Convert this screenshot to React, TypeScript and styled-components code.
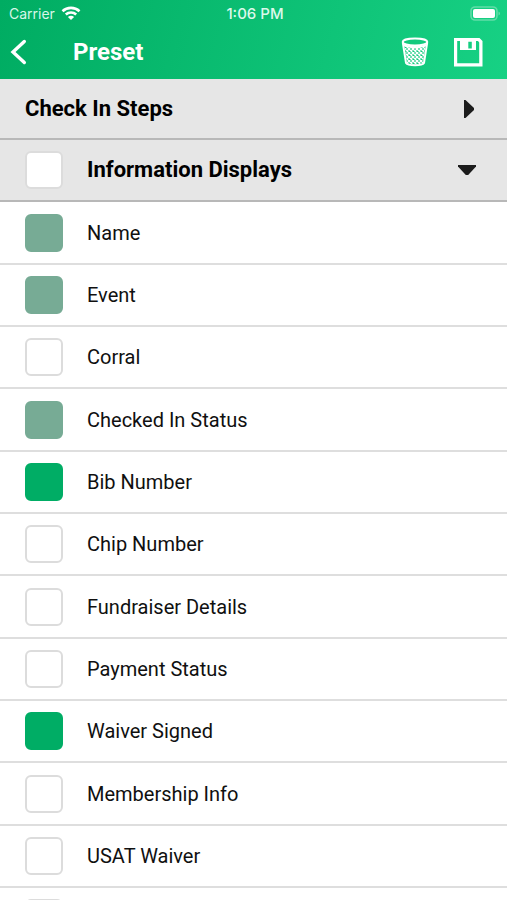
import React, { useState } from "react";
import styled, { createGlobalStyle } from "styled-components";

const GlobalStyle = createGlobalStyle`
  * { box-sizing: border-box; }
  body { margin: 0; background: #fff; }
  button { border: 0; padding: 0; background: none; color: inherit; font: inherit; cursor: pointer; }
  svg { display: block; }
`;

const Screen = styled.div`
  height: 100vh;
  display: flex;
  flex-direction: column;
  overflow: hidden;
  font-family: Roboto, sans-serif;
  color: #101010;
`;

const Header = styled.header`
  flex: none;
  color: #fff;
  background: linear-gradient(105deg, #00ac62 0%, #17d184 100%);
`;

const StatusBar = styled.div`
  display: grid;
  grid-template-columns: 1fr auto 1fr;
  align-items: center;
  height: 27px;
  padding: 0 6px 0 9px;
  font-family: Inter, sans-serif;
  font-size: 14px;
  line-height: 26px;
`;

const Carrier = styled.div`
  display: flex;
  align-items: center;
  gap: 6px;
  color: #d8f6e8;
`;

const Clock = styled.div`
  font-size: 15px;
  font-weight: 500;
  color: #dcf8eb;
`;

const Battery = styled.div`
  justify-self: end;
`;

const NavBar = styled.div`
  display: flex;
  align-items: center;
  height: 52px;
  padding: 0 24px 2px 10px;
`;

const BackButton = styled.button`
  width: 63px;
  height: 48px;
`;

const Title = styled.h1`
  flex: 1;
  margin: 0;
  font-size: 24px;
  line-height: 48px;
  font-weight: 700;
`;

const Actions = styled.div`
  display: flex;
  align-items: center;
  gap: 24px;
`;

const SectionHeader = styled.div`
  display: flex;
  align-items: center;
  gap: 24px;
  min-height: 61px;
  padding: 0 26px 0 25px;
  background: #e6e6e6;
  border-bottom: 2px solid #b8b8b8;
`;

const Section = styled.section`
  flex: none;
  & + & ${SectionHeader} { min-height: 62px; }
`;

const SectionTitle = styled.h2`
  flex: 1;
  margin: 0;
  font-size: 22px;
  line-height: 28px;
  font-weight: 700;
  color: #000;
`;

const OptionList = styled.ul`
  margin: 0;
  padding: 0;
  list-style: none;
`;

const Option = styled.li`
  min-height: 62px;
  display: flex;
  border-bottom: 2px solid #dedede;
  &:nth-child(3n + 1) { min-height: 63px; }
`;

const OptionLabel = styled.label`
  flex: 1;
  display: flex;
  align-items: center;
  gap: 24px;
  padding: 0 25px;
  font-size: 20px;
  line-height: 26px;
`;

const CheckBox = styled.input`
  appearance: none;
  flex: none;
  width: 38px;
  height: 38px;
  margin: 0;
  border: 2px solid #dcdcdc;
  border-radius: 6px;
  background: #fff;
  &:checked { background: #00ad65; border-color: #00ad65; }
  &:checked:disabled { background: #77ab95; border-color: #77ab95; }
`;

const ToggleArrow = styled.button<{ $open: boolean }>`
  display: flex;
  align-items: center;
  justify-content: center;
  width: 28px;
  height: 40px;
  padding-left: ${(p) => (p.$open ? "0" : "4px")};
`;

const WifiIcon = () => (
  <svg width="20" height="15" viewBox="0 0 20 15" fill="none" stroke="#fff" strokeWidth="2.6">
    <path d="M1.5 5.2C6.2.8 13.8.8 18.5 5.2" />
    <path d="M4.8 8.5C7.7 5.8 12.3 5.8 15.2 8.5" />
    <path d="M10 14 6.9 10.9C8.6 9.3 11.4 9.3 13.1 10.9Z" fill="#fff" stroke="none" />
  </svg>
);

const BatteryIcon = () => (
  <svg width="31" height="15" viewBox="0 0 31 15">
    <rect x="1" y="1" width="26" height="13" rx="4" fill="none" stroke="#62dda8" strokeWidth="1.6" />
    <rect x="3" y="3" width="22" height="9" rx="2" fill="#fff" />
    <path d="M28.5 5.5v4c2-.8 2-3.2 0-4Z" fill="#62dda8" />
  </svg>
);

const BackIcon = () => (
  <svg width="18" height="26" viewBox="0 0 18 26" fill="none" stroke="#fff" strokeWidth="3.4" strokeLinecap="round">
    <path d="M14.3 2.5 3 13l11.3 10.5" />
  </svg>
);

const TrashIcon = () => (
  <svg width="28" height="30" viewBox="0 0 28 30" fill="none" stroke="#fff">
    <defs>
      <pattern id="mesh" width="4" height="4" patternUnits="userSpaceOnUse">
        <path d="M-1 -1 5 5M5 -1-1 5" stroke="#fff" strokeWidth="1.3" />
      </pattern>
    </defs>
    <path d="M3.5 8h21l-2.5 18c-3 2-13 2-16 0Z" fill="url(#mesh)" stroke="none" />
    <ellipse cx="14" cy="5" rx="12.3" ry="3.4" strokeWidth="2" />
    <path d="M1.8 5.5 5 26c2 3 16 3 18 0l3.2-20.5" strokeWidth="2" />
    <path d="M3 8.2c5 2.6 17 2.6 22 0" strokeWidth="2" />
  </svg>
);

const SaveIcon = () => (
  <svg width="30" height="30" viewBox="0 0 30 30">
    <path fill="#fff" fillRule="evenodd" d="M1 1h25.5L29.5 4V29.5H1ZM4.2 4v22.2h22V5.5L25 4Z" />
    <path fill="#fff" fillRule="evenodd" d="M7 3h16v10H7ZM15.3 4.8v6.8h3.5V4.8Z" />
  </svg>
);

const Arrow = ({ open }: { open: boolean }) =>
  open ? (
    <svg width="18" height="12" viewBox="0 0 18 12">
      <path d="M0 1h18v1.5L10.2 11H7.8L0 2.5Z" fill="#1c1c1c" />
    </svg>
  ) : (
    <svg width="12" height="18" viewBox="0 0 12 18">
      <path d="M1 0h1.5L11 8v2L2.5 18H1Z" fill="#1c1c1c" />
    </svg>
  );

type Item = { name: string; checked?: boolean; locked?: boolean };

const items: Item[] = [
  { name: "Name", checked: true, locked: true },
  { name: "Event", checked: true, locked: true },
  { name: "Corral" },
  { name: "Checked In Status", checked: true, locked: true },
  { name: "Bib Number", checked: true },
  { name: "Chip Number" },
  { name: "Fundraiser Details" },
  { name: "Payment Status" },
  { name: "Waiver Signed", checked: true },
  { name: "Membership Info" },
  { name: "USAT Waiver" },
  { name: "" },
];

export default function App() {
  const [stepsOpen, setStepsOpen] = useState(false);
  const [displaysOpen, setDisplaysOpen] = useState(true);

  return (
    <Screen>
      <GlobalStyle />
      <Header>
        <StatusBar>
          <Carrier>Carrier <WifiIcon /></Carrier>
          <Clock>1:06 PM</Clock>
          <Battery><BatteryIcon /></Battery>
        </StatusBar>
        <NavBar>
          <BackButton aria-label="Back"><BackIcon /></BackButton>
          <Title>Preset</Title>
          <Actions>
            <button aria-label="Delete"><TrashIcon /></button>
            <button aria-label="Save"><SaveIcon /></button>
          </Actions>
        </NavBar>
      </Header>
      <Section>
        <SectionHeader>
          <SectionTitle>Check In Steps</SectionTitle>
          <ToggleArrow $open={stepsOpen} aria-label="Toggle steps" aria-expanded={stepsOpen} onClick={() => setStepsOpen(!stepsOpen)}>
            <Arrow open={stepsOpen} />
          </ToggleArrow>
        </SectionHeader>
      </Section>
      <Section>
        <SectionHeader>
          <CheckBox type="checkbox" aria-labelledby="displays" />
          <SectionTitle id="displays">Information Displays</SectionTitle>
          <ToggleArrow $open={displaysOpen} aria-label="Toggle displays" aria-expanded={displaysOpen} onClick={() => setDisplaysOpen(!displaysOpen)}>
            <Arrow open={displaysOpen} />
          </ToggleArrow>
        </SectionHeader>
        {displaysOpen && (
          <OptionList>
            {items.map((item) => (
              <Option key={item.name}>
                <OptionLabel>
                  <CheckBox
                    type="checkbox"
                    defaultChecked={item.checked}
                    disabled={item.locked}
                    aria-label={item.name || "More"}
                  />
                  {item.name}
                </OptionLabel>
              </Option>
            ))}
          </OptionList>
        )}
      </Section>
    </Screen>
  );
}
